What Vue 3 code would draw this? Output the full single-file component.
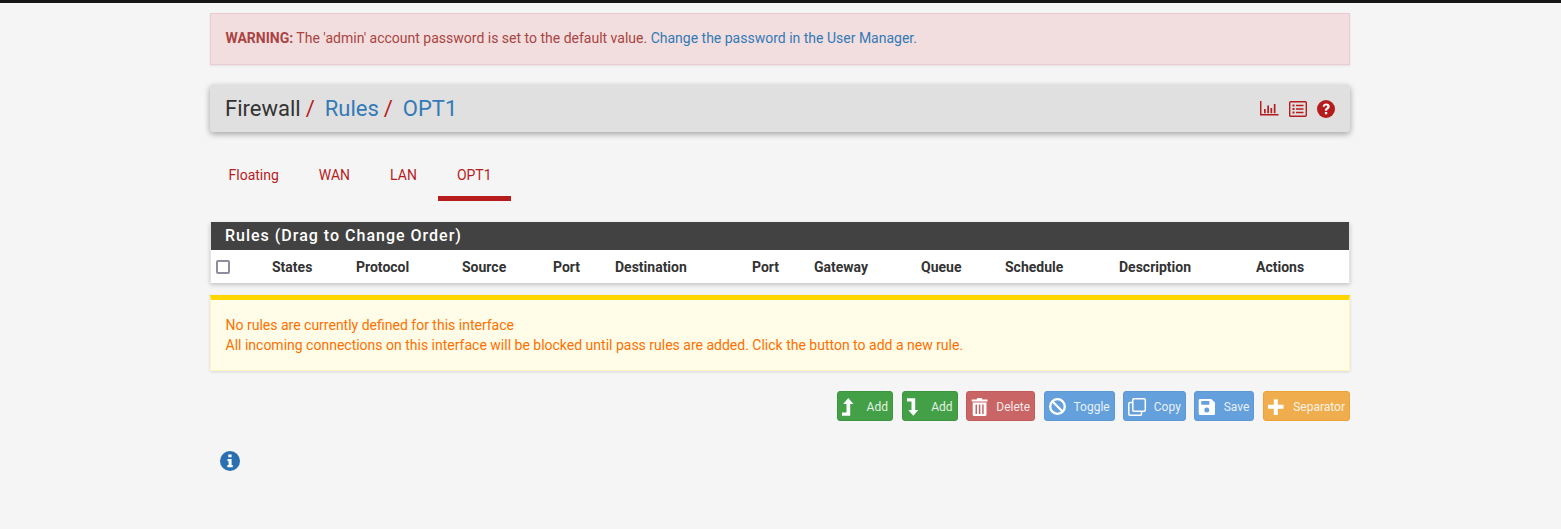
<script setup>
const crumbs = ['Rules', 'OPT1']
const tabs = ['Floating', 'WAN', 'LAN', 'OPT1']
const columns = ['States', 'Protocol', 'Source', 'Port', 'Destination', 'Port', 'Gateway', 'Queue', 'Schedule', 'Description', 'Actions']
const buttons = [
  { label: 'Add', color: 'green', icon: 'up' },
  { label: 'Add', color: 'green', icon: 'down' },
  { label: 'Delete', color: 'red', icon: 'trash' },
  { label: 'Toggle', color: 'blue', icon: 'ban' },
  { label: 'Copy', color: 'blue', icon: 'clone' },
  { label: 'Save', color: 'blue', icon: 'save' },
  { label: 'Separator', color: 'orange', icon: 'plus' }
]
</script>

<template>
  <div class="page">
    <div class="topbar"></div>
    <main class="container">
      <div class="alert-danger">
        <strong>WARNING:</strong> The 'admin' account password is set to the default value.
        <a>Change the password in the User Manager.</a>
      </div>

      <header class="page-header">
        <div class="breadcrumb">
          <span class="crumb-plain">Firewall</span><span class="slash">/</span>
          <template v-for="(c, i) in crumbs" :key="c">
            <a class="crumb-link">{{ c }}</a><span v-if="i < crumbs.length - 1" class="slash">/</span>
          </template>
        </div>
        <div class="header-icons">
          <svg width="19" height="15" viewBox="0 0 19 15"><path d="M0.700 0v13.800H18.500" fill="none" stroke="#b71c1c" stroke-width="1.500"/><path d="M4 8h1.700v4.300H4zM7.300 4.500h1.700v7.800H7.300zM10.500 7h1.700v5.300h-1.700zM13.800 3h1.700v9.300h-1.700z" fill="#b71c1c"/></svg>
          <svg width="18" height="16" viewBox="0 0 18 16"><rect x="0.700" y="0.700" width="16.600" height="14.600" rx="1" fill="none" stroke="#b71c1c" stroke-width="1.400"/><path d="M3.500 3.500h2v2h-2zM3.500 7h2v2h-2zM3.500 10.500h2v2h-2zM7 3.700h7.500v1.500H7zM7 7.200h7.500v1.500H7zM7 10.700h7.500v1.500H7z" fill="#b71c1c"/></svg>
          <svg width="18" height="18" viewBox="0 0 18 18"><circle cx="9" cy="9" r="9" fill="#b71c1c"/><path d="M5.600 6.600C5.900 4.700 7.300 3.500 9.200 3.500c2 0 3.500 1.300 3.500 3 0 1.400-.8 2.100-1.700 2.700-.7.500-.9.700-.9 1.300v.3H7.900v-.6c0-1.100.5-1.700 1.300-2.200.7-.5 1.100-.8 1.100-1.400 0-.6-.5-1-1.200-1-.8 0-1.300.5-1.500 1.300zM7.900 12h2.300v2.300H7.900z" fill="#fff"/></svg>
        </div>
      </header>

      <nav class="tabs">
        <a v-for="t in tabs" :key="t" class="tab" :class="{ active: t === 'OPT1' }">{{ t }}</a>
      </nav>

      <section class="panel">
        <h2 class="panel-title">Rules (Drag to Change Order)</h2>
        <div class="table-head">
          <span class="check"></span>
          <span v-for="(c, i) in columns" :key="i" class="th">{{ c }}</span>
        </div>
      </section>

      <div class="alert-warning">
        <div>No rules are currently defined for this interface</div>
        <div>All incoming connections on this interface will be blocked until pass rules are added. Click the button to add a new rule.</div>
      </div>

      <div class="actions">
        <button v-for="(b, i) in buttons" :key="i" class="btn" :class="[b.color, b.icon]">
          <svg class="btn-icon" viewBox="0 0 20 20" width="20" height="20">
            <path v-if="b.icon === 'up'" d="M0 19.800V16.500H4.500V8H1.200L6.300 2l5.100 6H8.200V19.800z" fill="#fff"/>
            <path v-else-if="b.icon === 'down'" d="M0 2.300H8.200V14H11.300L6.300 19.800 1.300 14H4.500V5.500H0z" fill="#fff"/>
            <path v-else-if="b.icon === 'trash'" d="M5.500 3.500 6.500 2h4l1 1.500h5V5.500H.700V3.500zM1.700 6.500h13.800V18.500A1.500 1.500 0 0 1 14 20H3.200a1.500 1.500 0 0 1-1.500-1.500zM4.500 8.500V18H6V8.500zM7.800 8.500V18h1.600V8.500zM11.200 8.500V18h1.500V8.500z" fill="#fff" fill-rule="evenodd"/>
            <g v-else-if="b.icon === 'ban'" fill="none" stroke="#fff" stroke-width="2.300"><circle cx="8.500" cy="10.500" r="7.300"/><path d="M3.500 5.500 13.500 15.500"/></g>
            <g v-else-if="b.icon === 'clone'" fill="none" stroke="#fff" stroke-width="1.500"><rect x="4.800" y="2.800" width="12.500" height="12.500" rx="1.200"/><path d="M4.800 6.500H2A1.200 1.200 0 0 0 .800 7.700V18A1.200 1.200 0 0 0 2 19.200H12.300A1.200 1.200 0 0 0 13.500 18V15.300"/></g>
            <path v-else-if="b.icon === 'save'" d="M.700 3h11.500L16 6.500V17.500A1.500 1.500 0 0 1 14.500 19H1.200A1.500 1.500 0 0 1 -.300 17.500V4.500A1.500 1.500 0 0 1 .700 3zM2.300 5v3.800H10.300V5zM7.800 11.500a2.500 2.500 0 1 0 0 5 2.500 2.500 0 0 0 0-5z" fill="#fff" fill-rule="evenodd"/>
            <path v-else d="M5.800 3.300h4v5.500h5.700v4H9.800V19h-4v-6.200H0v-4h5.800z" fill="#fff"/>
          </svg>
          <span>{{ b.label }}</span>
        </button>
      </div>

      <svg class="info" width="20" height="20" viewBox="0 0 20 20">
        <circle cx="10" cy="10" r="10" fill="#2a70b0"/>
        <path d="M8.300 3.500h3.300v2.700H8.300zM7.500 8h4.100v6h1.100v2.300H7.400V14h1.200v-3.700H7.500z" fill="#fff"/>
      </svg>
    </main>
  </div>
</template>

<style scoped>
.page {
  min-height: 529px;
  background: #f5f5f5;
  font-family: Roboto, "Liberation Sans", sans-serif;
  font-size: 14px;
  color: #333;
  overflow: hidden;
}

.topbar {
  height: 3px;
  background: #151515;
}

.container {
  width: 1140px;
  margin-left: 210px;
  padding-top: 10px;
}

.alert-danger {
  height: 52px;
  box-sizing: border-box;
  padding: 14px 14.500px;
  line-height: 20px;
  background: #f2dede;
  border: 1px solid #ebccd1;
  color: #a94442;
  box-shadow: 0 1px 2px rgba(0, 0, 0, 0.08);
}

.alert-danger a {
  color: #337ab7;
}

.page-header {
  height: 47px;
  margin-top: 20px;
  padding: 0 15px 0 15px;
  display: flex;
  align-items: center;
  justify-content: space-between;
  background: #e0e0e0;
  border-radius: 3px;
  box-shadow: 0 2px 6px rgba(0, 0, 0, 0.35);
}

.breadcrumb {
  font-size: 22px;
  line-height: 47px;
}

.slash {
  color: #b71c1c;
  margin: 0 10px 0 5px;
}

.crumb-link {
  color: #337ab7;
}

.header-icons {
  display: flex;
  align-items: center;
  gap: 10px;
}

.tabs {
  display: flex;
  gap: 2px;
  margin-top: 19px;
  height: 50px;
}

.tab {
  padding: 14px 19px 0;
  line-height: 20px;
  color: #b71c1c;
  border-bottom: 5px solid transparent;
  box-sizing: border-box;
  height: 50px;
}

.tab:first-child {
  padding-left: 18.500px;
}

.tab.active {
  border-bottom-color: #b71c1c;
}

.panel {
  margin-top: 21px;
  border: 1px solid #e4e4e4;
  border-bottom: 0;
  border-top: 0;
  background: #fff;
  box-shadow: 0 2px 4px rgba(0, 0, 0, 0.2);
}

.panel-title {
  margin: 0;
  height: 28px;
  padding-left: 14px;
  background: #424242;
  color: #fff;
  font-size: 16px;
  font-weight: 500;
  line-height: 28px;
  letter-spacing: 1px;
}

.table-head {
  height: 33px;
  display: grid;
  grid-template-columns: 56px 84px 106px 91px 62px 137px 62px 107px 84px 114px 137px 1fr;
  align-items: center;
  font-weight: 700;
  color: #333;
}

.th {
  padding-left: 5px;
}

.check {
  width: 10px;
  height: 10px;
  margin-left: 5px;
  border: 2px solid #8d8d9d;
  border-radius: 2px;
  background: #fff;
}

.alert-warning {
  margin-top: 12px;
  height: 76px;
  box-sizing: border-box;
  padding: 15px 14.500px 0;
  line-height: 20px;
  background: #fffde7;
  border-top: 5px solid #ffd600;
  border-left: 1px solid #fff3c0;
  border-right: 1px solid #fff3c0;
  border-bottom: 1px solid #fff3c0;
  color: #ff6f00;
  box-shadow: 0 1px 3px rgba(0, 0, 0, 0.12);
}

.actions {
  margin-top: 20px;
  display: flex;
  justify-content: flex-end;
  gap: 8.600px;
}

.btn {
  height: 30px;
  display: flex;
  align-items: center;
  justify-content: space-between;
  padding: 0 4px;
  border: 1px solid transparent;
  border-radius: 3px;
  color: #fff;
  font: 12px Roboto, "Liberation Sans", sans-serif;
  box-sizing: border-box;
}

.btn span {
  opacity: 0.85;
  padding-top: 1px;
}

.btn.green { background: #43a047; border-color: #3d9441; }
.btn.red { background: #c96565; border-color: #c25c5c; }
.btn.blue { background: #64a0dc; border-color: #5c98d6; }
.btn.orange { background: #f0ad4e; border-color: #eea236; }

.btn.up, .btn.down { width: 56px; }
.btn.trash { width: 69px; }
.btn.ban { width: 71px; }
.btn.clone { width: 62.500px; }
.btn.save { width: 60px; }
.btn.plus { width: 87px; }

.btn-icon {
  flex: none;
  overflow: visible;
}

.info {
  display: block;
  margin: 30px 0 0 9.500px;
}
</style>
